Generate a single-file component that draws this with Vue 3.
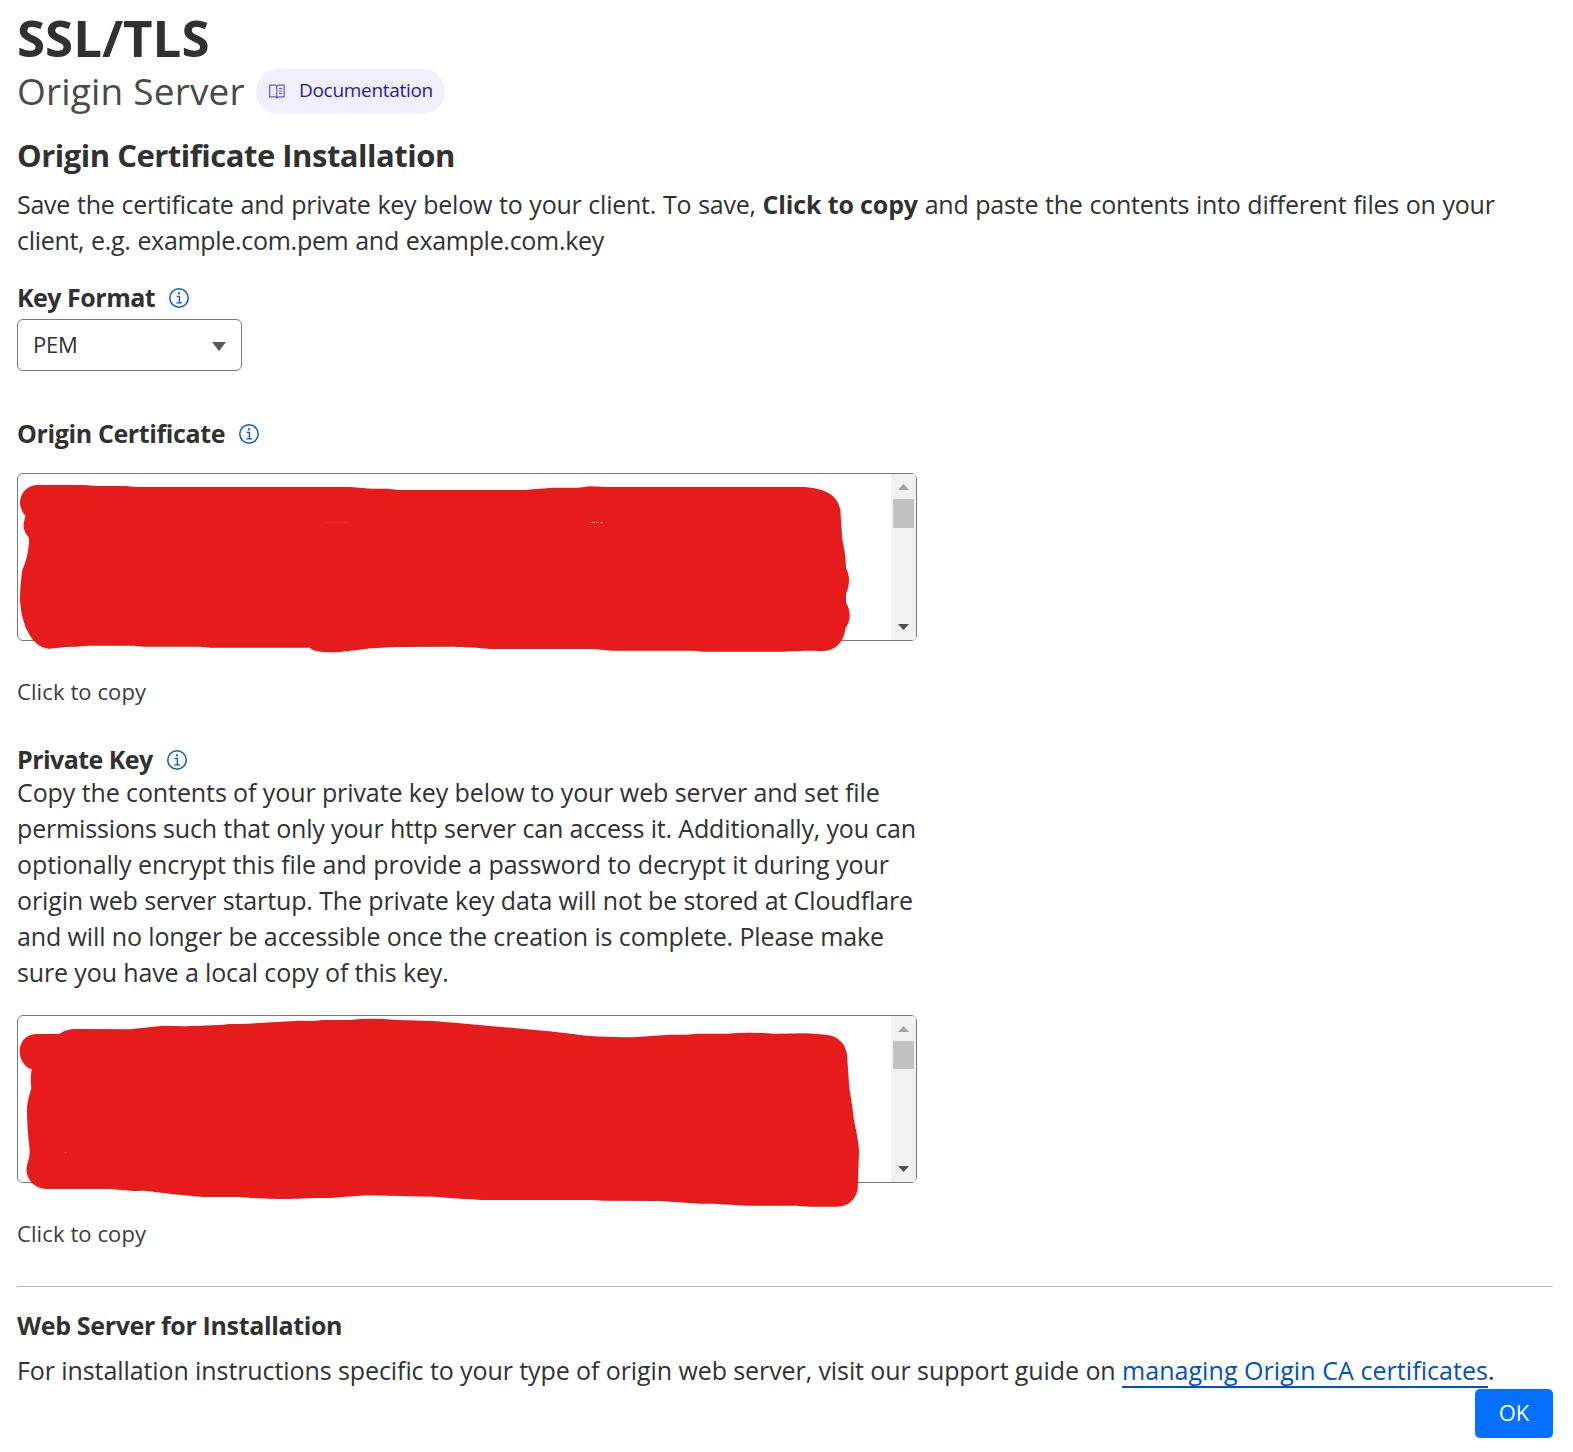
<script setup>
import { h } from 'vue'

const InfoIcon = () =>
  h('svg', { width: 20, height: 20, viewBox: '0 0 20 20', fill: 'none', stroke: '#0b57cf' }, [
    h('circle', { cx: 10, cy: 10, r: 9.2, 'stroke-width': 1.5 }),
    h('path', { d: 'M7.6 8.4H10.4V14.6M7.3 14.9H13', 'stroke-width': 1.4 }),
    h('rect', { x: 9, y: 4.3, width: 1.9, height: 2, fill: '#0b57cf', stroke: 'none' })
  ])

const keyText = [
  ['Copy the contents of your private key below to your web server and set file', -0.095],
  ['permissions such that only your http server can access it. Additionally, you can', -0.153],
  ['optionally encrypt this file and provide a password to decrypt it during your', -0.045],
  ['origin web server startup. The private key data will not be stored at Cloudflare', -0.12],
  ['and will no longer be accessible once the creation is complete. Please make', -0.12],
  ['sure you have a local copy of this key.', -0.125]
]
</script>

<template>
  <main class="page">
    <h1>SSL/TLS</h1>
    <div class="subtitle">
      <span class="section-name">Origin Server</span>
      <a class="docs">
        <svg width="16" height="15" viewBox="0 0 16 15" fill="none" stroke="#6353dc" stroke-width="1.2">
          <path d="M.7 1.2H6.2L7.8 2L9.4 1.2H15.1V12.9H9.4L7.8 13.8L6.2 12.9H.7ZM7.8 2V14.6M10 4.5H13.2M10 7H13.2M10 9.5H13.2" />
        </svg>
        <span>Documentation</span>
      </a>
    </div>

    <h2>Origin Certificate Installation</h2>
    <p class="intro">
      <span class="i1">Save the certificate and private key below to your client. To save, </span><b>Click to copy</b><span class="i2"> and paste the contents into different files on your</span><br>
      <span class="i3">client, e.g. example.com.pem and example.com.key</span>
    </p>

    <div class="label format-label"><span>Key Format</span><InfoIcon /></div>
    <div class="select">
      <span>PEM</span>
      <svg width="14" height="9" viewBox="0 0 14 9"><path d="M0 0H14L7 9Z" fill="#595959" /></svg>
    </div>

    <div class="label cert-label"><span>Origin Certificate</span><InfoIcon /></div>
    <div class="box cert-box">
      <div class="scrollbar">
        <svg width="11" height="6" viewBox="0 0 11 6"><path d="M0 6L5.5 0L11 6Z" fill="#a3a3a3" /></svg>
        <div class="thumb"></div>
        <svg class="down" width="11" height="6" viewBox="0 0 11 6"><path d="M0 0H11L5.5 6Z" fill="#505050" /></svg>
      </div>
      <svg class="scribble" width="930" height="260" viewBox="0 0 2790 780">
        <path fill="#e61c1c" d="M112 75L250 75L290 78L375 78L410 81L1050 81L1115 86L1165 86L1195 90L1570 90L1660 83L1735 83L1770 79L1815 81L2410 81C2480 84 2522 110 2522 165L2527 240Q2537 280 2538 325C2550 345 2550 375 2538 400L2538 428C2552 450 2554 480 2537 503C2530 550 2505 573 2465 573C2400 570 2380 574 2340 575L2110 575L2080 572L1835 572L1780 567L1470 567L1430 563L1360 560L1190 561L1115 565L1020 576C980 578 940 576 930 563L630 563L600 560L430 560L400 557L265 557L230 560C190 560 180 563 145 566C90 560 60 480 60 410Q62 360 67 330C80 300 87 270 87 233C66 210 68 190 77 168C45 135 60 78 112 75Z" />
        <path d="M975 187.500H990M995 187.500H1025M1030 187.500H1047" stroke="#e82828" stroke-width="3" />
        <path d="M1770 187.500H1785M1788 187.500H1797M1800 187.500H1809" stroke="#ec8080" stroke-width="3" />
      </svg>
    </div>
    <div class="copy">Click to copy</div>

    <div class="label key-label"><span>Private Key</span><InfoIcon /></div>
    <p class="key-text">
      <span v-for="[line, spacing] in keyText" :key="line" :style="{ letterSpacing: spacing + 'px' }">{{ line }}</span>
    </p>
    <div class="box key-box">
      <div class="scrollbar">
        <svg width="11" height="6" viewBox="0 0 11 6"><path d="M0 6L5.5 0L11 6Z" fill="#a3a3a3" /></svg>
        <div class="thumb"></div>
        <svg class="down" width="11" height="6" viewBox="0 0 11 6"><path d="M0 0H11L5.5 6Z" fill="#505050" /></svg>
      </div>
      <svg class="scribble" width="930" height="260" viewBox="0 0 2790 780">
        <path fill="#e61c1c" d="M108 102L178 102Q195 88 222 87L390 88L490 77L555 79L660 75L690 72L730 72L900 62L940 63L970 60L1050 60Q1110 53 1190 60L1300 63L1380 70L1640 93L1720 102Q1780 112 1900 112L2010 104L2060 104L2090 101L2180 101Q2240 95 2320 101L2420 100L2480 104C2520 110 2538 135 2541 165L2548 265L2557 320L2561 355C2570 400 2577 430 2577 460L2573 570C2565 600 2545 618 2515 620Q2440 622 2390 617L2240 617L2140 611L2100 611L1980 603L1810 602L1780 600L1445 600L1380 596L1300 590L1100 586L990 594L940 594Q850 600 770 595L715 591L610 591L520 583L435 572L400 573L330 567L140 567C95 565 68 525 84 485Q91 465 88 440Q80 370 81 320Q85 290 94 265Q90 235 95 208C45 190 45 105 108 102Z" />
        <rect x="195" y="456" width="3" height="3" fill="#e05070" />
      </svg>
    </div>
    <div class="copy">Click to copy</div>

    <div class="divider"></div>
    <h3>Web Server for Installation</h3>
    <p class="guide"><span>For installation instructions specific to your type of origin web server, visit our support guide on </span><a>managing Origin CA certificates</a>.</p>
    <div class="actions"><button>OK</button></div>
  </main>
</template>

<style>
body {
  margin: 0;
  background: #fff;
}
</style>

<style scoped>
.page {
  box-sizing: border-box;
  height: 1452px;
  padding: 7px 20px 0 17px;
  overflow: hidden;
  font: 25px/36px "Open Sans", "Noto Sans", sans-serif;
  color: #313131;
  white-space: nowrap;
}
h1, h2, h3, p {
  margin: 0;
}
h1 {
  font-size: 51px;
  line-height: 60px;
}
.subtitle {
  display: flex;
  align-items: flex-start;
  gap: 11px;
  height: 45px;
  margin-top: 2px;
}
.section-name {
  width: 228px;
  margin-top: -1px;
  font-size: 37px;
  line-height: 45px;
  letter-spacing: 0.18px;
  color: #4a4a4a;
}
.docs {
  display: flex;
  box-sizing: border-box;
  width: 189px;
  height: 45px;
  padding-left: 13px;
  border-radius: 23px;
  background: #f1eefd;
  font-size: 19px;
  line-height: 43px;
  letter-spacing: -0.3px;
  color: #2a17a5;
}
.docs svg {
  margin: 14.5px 14px 0 0;
}
h2 {
  margin-top: 21px;
  font-size: 31px;
  line-height: 40px;
  letter-spacing: -0.49px;
}
.intro {
  margin-top: 11px;
}
.i1 {
  letter-spacing: -0.26px;
  word-spacing: 0.7px;
}
.intro b {
  letter-spacing: -0.15px;
}
.i2 {
  letter-spacing: -0.22px;
  word-spacing: 0.5px;
}
.i3 {
  letter-spacing: -0.3px;
  word-spacing: 0.6px;
}
.label {
  display: flex;
  align-items: flex-start;
  gap: 14px;
  height: 36px;
  font-weight: 700;
}
.label svg {
  margin-top: 9px;
}
.format-label {
  margin-top: 21px;
  letter-spacing: -0.5px;
}
.cert-label {
  margin-top: 44px;
  letter-spacing: -0.38px;
}
.key-label {
  margin-top: 35px;
  letter-spacing: -0.55px;
}
.select {
  display: flex;
  align-items: center;
  justify-content: space-between;
  box-sizing: border-box;
  width: 225px;
  height: 52px;
  margin-top: 4px;
  padding: 0 15px;
  border: 1px solid #797979;
  border-radius: 6px;
  font-size: 22px;
}
.select span {
  margin-top: -2px;
  letter-spacing: -0.2px;
}
.select svg {
  margin-top: 3px;
}
.box {
  position: relative;
  box-sizing: border-box;
  display: flex;
  justify-content: flex-end;
  width: 900px;
  height: 168px;
  border: 1px solid #797979;
  border-radius: 6px;
}
.cert-box {
  margin-top: 22px;
}
.key-box {
  margin-top: 25px;
}
.scrollbar {
  display: flex;
  flex-direction: column;
  align-items: center;
  box-sizing: border-box;
  width: 25px;
  padding: 10px 0;
  border-radius: 0 4px 4px 0;
  background: #f1f1f1;
}
.thumb {
  width: 21px;
  height: 29px;
  margin-top: 9px;
  background: #c1c1c1;
}
.key-box .thumb {
  height: 28px;
}
.down {
  margin-top: auto;
}
.scribble {
  position: absolute;
  left: -18px;
  top: -14px;
}
.key-box .scribble {
  top: -16px;
}
.copy {
  margin-top: 35px;
  font-size: 22px;
  line-height: 30px;
  letter-spacing: 0.1px;
  color: #3c3c3c;
}
.key-text {
  display: flex;
  flex-direction: column;
  margin-top: -3px;
}
.divider {
  height: 1px;
  margin-top: 38px;
  background: #b6b6b6;
}
h3 {
  margin-top: 20px;
  font-size: 25px;
  line-height: 36px;
  letter-spacing: -0.36px;
}
.guide {
  margin-top: 9px;
}
.guide span {
  letter-spacing: -0.088px;
}
.guide a {
  letter-spacing: 0.06px;
  color: #0051c3;
  text-decoration: underline 2px;
  text-decoration-skip-ink: none;
  text-underline-offset: 6px;
}
.actions {
  display: flex;
  justify-content: flex-end;
  margin-top: 1px;
}
button {
  width: 78px;
  height: 49px;
  padding: 0 0 2px;
  border: 0;
  border-radius: 5px;
  background: #056fff;
  font: 22px/47px "Open Sans", sans-serif;
  color: #fff;
}
</style>
